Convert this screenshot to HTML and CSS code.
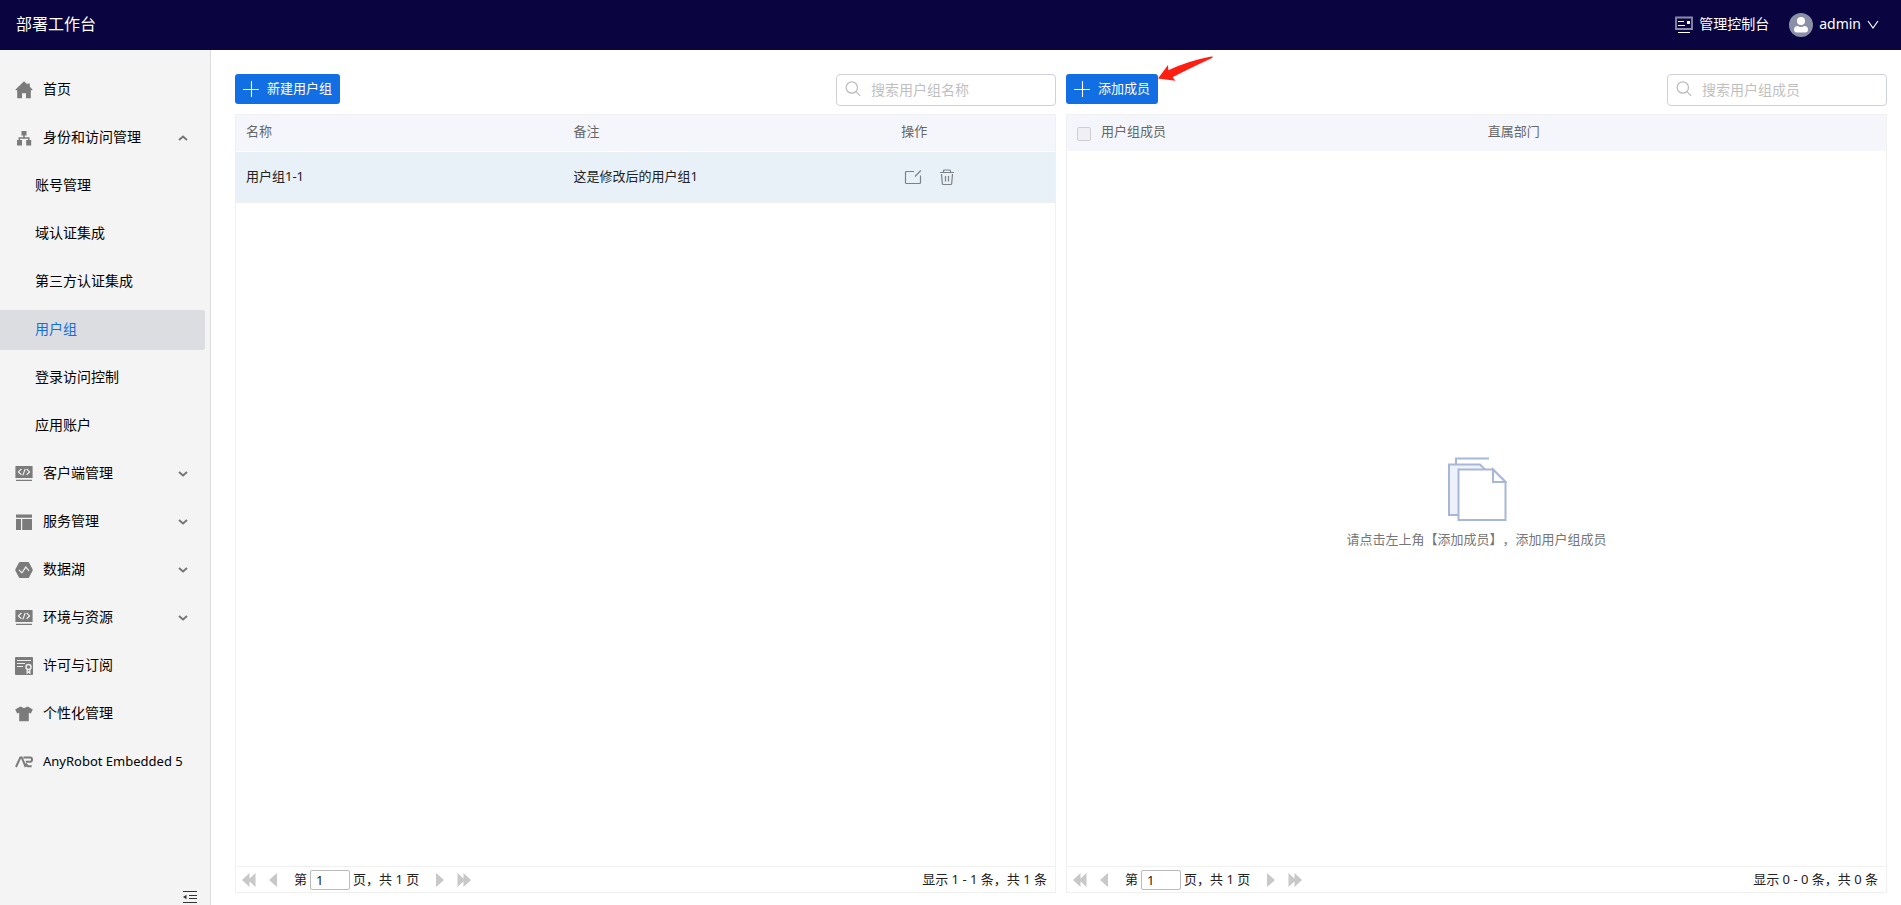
FILE: index.html
```html
<!DOCTYPE html>
<html lang="zh-CN">
<head>
<meta charset="utf-8">
<title>部署工作台</title>
<link rel="stylesheet" href="styles.css">
</head>
<body>
<svg class="sprite" aria-hidden="true">
  <symbol id="i-down" viewBox="0 0 10 10"><path d="M1 3 5 6.500 9 3" fill="none" stroke="#777" stroke-width="2"/></symbol>
  <symbol id="i-code" viewBox="0 0 18 18"><path fill="#7b7b7b" d="M1 1h16a.6.6 0 0 1 .6.6v11.400H.4V1.600A.6.6 0 0 1 1 1zM1 14.800h16v1.200H1z"/><path d="M6.400 4 3.400 6.900l3 2.900M11.600 4l3 2.900-3 2.900M10.200 4 7.800 10.400" fill="none" stroke="#f0f0f0" stroke-width="1.200"/></symbol>
  <symbol id="i-plus" viewBox="0 0 16 16"><path d="M8.500 0v16M0 8.500h16" stroke="#fff" stroke-width="1.100"/></symbol>
  <symbol id="i-search" viewBox="0 0 16 16"><circle cx="6.800" cy="6.500" r="5.700" fill="none" stroke="#bbb" stroke-width="1.200"/><path d="m11 10.600 4.200 4.200" stroke="#bbb" stroke-width="1.200"/></symbol>
  <symbol id="i-first" viewBox="0 0 14 14"><path fill="#c8c8c8" d="M7.500 0v14L0 7zM13.500 0v14L6 7z"/></symbol>
  <symbol id="i-prev" viewBox="0 0 8 14"><path fill="#c8c8c8" d="M8 0v14L0 7z"/></symbol>
  <symbol id="i-next" viewBox="0 0 8 14"><path fill="#c8c8c8" d="M0 0v14l8-7z"/></symbol>
  <symbol id="i-last" viewBox="0 0 14 14"><path fill="#c8c8c8" d="M.5 0v14L8 7zM6.500 0v14L14 7z"/></symbol>
</svg>

<header class="topbar">
  <h1 class="brand">部署工作台</h1>
  <div class="topbar-right">
    <a class="console-link" href="#">
      <svg class="icon18" viewBox="0 0 18 18"><path d="M1 1.500h16v11.500H1z" fill="none" stroke="#8d8cab" stroke-width="1.800"/><path d="M3 5.500h6M3 9.500h7M3 16.500h12" stroke="#fff" stroke-width="1.200"/><path d="M12 5h3v3h-3z" fill="#fff"/></svg>
      <span>管理控制台</span>
    </a>
    <button class="user" type="button">
      <svg class="avatar" viewBox="0 0 24 24"><circle cx="12" cy="12" r="12" fill="#8b90a8"/><circle cx="12" cy="8" r="4" fill="#fff"/><path d="M5 16.500c0-2 1.500-3.500 3.500-3.500q3.500 1.800 7 0c2 0 3.500 1.500 3.500 3.500 0 2-1 3-3 3H8c-2 0-3-1-3-3z" fill="#fff"/></svg>
      <span>admin</span>
      <svg class="caret" viewBox="0 0 12 10"><path d="M1 1l5 7 5-7" fill="none" stroke="#fff" stroke-width="1.200"/></svg>
    </button>
  </div>
</header>

<div class="layout">
  <aside class="sidebar">
    <nav class="nav">
      <a class="item" href="#"><svg class="icon18" viewBox="0 0 18 18"><path fill="#7b7b7b" d="M9 .2 12.500 3.500V2.500h2.300v3.200L17.500 8.500v.8h-1.700V17.300H11v-5H7v5H2.200V9.300H.5v-.8z"/></svg><span>首页</span></a>
      <a class="item" href="#"><svg class="icon18" viewBox="0 0 18 18"><path fill="#7b7b7b" d="M6.500 2h5v4.500h-5zM2 11h5v5.500H2zM11.200 11h5v5.500h-5z"/><path d="M9 6v3M4.300 11V9h9.500v2" fill="none" stroke="#7b7b7b" stroke-width="1.500"/></svg><span>身份和访问管理</span><svg class="chev chev-up"><use href="#i-down"/></svg></a>
      <a class="item sub" href="#">账号管理</a>
      <a class="item sub" href="#">域认证集成</a>
      <a class="item sub" href="#">第三方认证集成</a>
      <a class="item sub active" href="#">用户组</a>
      <a class="item sub" href="#">登录访问控制</a>
      <a class="item sub" href="#">应用账户</a>
      <a class="item" href="#"><svg class="icon18"><use href="#i-code"/></svg><span>客户端管理</span><svg class="chev"><use href="#i-down"/></svg></a>
      <a class="item" href="#"><svg class="icon18" viewBox="0 0 18 18"><path fill="#7b7b7b" d="M1 1.500h16v3.200H1zM1 6h5v11H1zM7.200 6H17v11H7.200z"/></svg><span>服务管理</span><svg class="chev"><use href="#i-down"/></svg></a>
      <a class="item" href="#"><svg class="icon18" viewBox="0 0 18 18"><path fill="#7b7b7b" d="M5 1h8q.7 0 1 .6L17.600 8.300q.3.700 0 1.400L14 16.400q-.3.600-1 .6H5q-.7 0-1-.6L.4 9.700Q.1 9 .4 8.300L4 1.600Q4.300 1 5 1z"/><path d="m4 8.800 2.900 3.100 3.900-5.800 3.300 3.700" fill="none" stroke="#eee" stroke-width="1.200"/></svg><span>数据湖</span><svg class="chev"><use href="#i-down"/></svg></a>
      <a class="item" href="#"><svg class="icon18"><use href="#i-code"/></svg><span>环境与资源</span><svg class="chev"><use href="#i-down"/></svg></a>
      <a class="item" href="#"><svg class="icon18" viewBox="0 0 18 18"><rect width="18" height="18" rx="1" fill="#7b7b7b"/><path d="M2 3.500h14M2 6.500h8M2 9.500h6" stroke="#eee" stroke-width="1.200"/><circle cx="13.500" cy="10" r="2.500" fill="none" stroke="#eee" stroke-width="1.500"/><path d="M12.200 12.500V16l1.300-1 1.300 1v-3.500" fill="none" stroke="#eee" stroke-width="1.400"/></svg><span>许可与订阅</span></a>
      <a class="item" href="#"><svg class="icon18" viewBox="0 0 18 18"><path fill="#7b7b7b" d="M4.800 1.800h1.800Q9 4.200 11.400 1.800h1.800L17.800 4.600 15.800 8.400l-2-.7V16.200H4.200V7.700l-2 .7L.2 4.600z"/></svg><span>个性化管理</span></a>
      <a class="item" href="#"><svg class="icon18" viewBox="0 0 18 18"><path d="M1 14 5.300 4.500h1.500l3.900 9.500M8.500 4.500h6.700q1.800 0 1.800 2 0 2.200-1.800 2.200h-4.400M10.800 10.500l1.900 2.700h4" fill="none" stroke="#7b7b7b" stroke-width="2"/></svg><span class="latin">AnyRobot Embedded 5</span></a>
    </nav>
    <button class="collapse" type="button" aria-label="收起菜单"><svg class="collapse-icon" viewBox="0 0 14 14"><path d="M0 1.500h14M6 5.500h8M6 8.500h8M0 12.500h14" stroke="#333" stroke-width="1.200"/><path d="M0 7l3.500-2.200v4.400z" fill="#333"/></svg></button>
  </aside>

  <main class="main">
    <section class="panel">
      <div class="toolbar">
        <button class="primary" type="button"><svg class="icon16"><use href="#i-plus"/></svg><span>新建用户组</span></button>
        <label class="search"><svg class="icon16"><use href="#i-search"/></svg><input type="text" placeholder="搜索用户组名称" aria-label="搜索用户组名称"></label>
      </div>
      <div class="grid">
        <table class="table">
          <colgroup><col class="c40"><col class="c40"><col class="c20"></colgroup>
          <thead><tr><th>名称</th><th>备注</th><th>操作</th></tr></thead>
          <tbody><tr>
            <td>用户组1-1</td><td>这是修改后的用户组1</td>
            <td><div class="actions">
              <button type="button" aria-label="编辑"><svg class="icon18" viewBox="0 0 18 18"><path d="M10 3.500H2.500Q1.500 3.500 1.500 4.500V14.500Q1.500 15.500 2.500 15.500H15.500Q16.500 15.500 16.500 14.500V7.500M11 8.500l5.800-6" fill="none" stroke="#7c8286" stroke-width="1.200"/></svg></button>
              <button type="button" aria-label="删除"><svg class="icon18" viewBox="0 0 18 18"><path d="M2 4.500h14M5.500 4.500V3Q5.500 2 6.500 2h5Q12.500 2 12.500 3v1.500M3.500 6l.8 9.500q.1 1 1.100 1h7.200q1 0 1.100-1L14.500 6M7.500 8v5.500M10.500 8v5.500" fill="none" stroke="#7c8286" stroke-width="1.200"/></svg></button>
            </div></td>
          </tr></tbody>
        </table>
        <div class="body"></div>
        <footer class="pager">
          <button type="button" aria-label="第一页"><svg class="arr2"><use href="#i-first"/></svg></button>
          <button type="button" aria-label="上一页"><svg class="arr1"><use href="#i-prev"/></svg></button>
          <label class="page"><span>第</span><input type="text" value="1"><span>页，共 1 页</span></label>
          <button type="button" aria-label="下一页"><svg class="arr1"><use href="#i-next"/></svg></button>
          <button type="button" aria-label="最后一页"><svg class="arr2"><use href="#i-last"/></svg></button>
          <span class="count">显示 1 - 1 条，共 1 条</span>
        </footer>
      </div>
    </section>

    <section class="panel">
      <div class="toolbar">
        <div class="pointed">
          <button class="primary" type="button"><svg class="icon16"><use href="#i-plus"/></svg><span>添加成员</span></button>
          <svg class="pointer" viewBox="0 0 56 26"><path fill="#ff1e12" d="M0 22.500 10 9l.3 5.300Q30 5 52 .8q3-.6 3 .2 0 .5-2 1.400Q30 13 14.500 21.200l3 3.600z"/></svg>
        </div>
        <label class="search"><svg class="icon16"><use href="#i-search"/></svg><input type="text" placeholder="搜索用户组成员" aria-label="搜索用户组成员"></label>
      </div>
      <div class="grid">
        <table class="table">
          <colgroup><col class="c4"><col class="c46"><col></colgroup>
          <thead><tr><th class="pick"><input class="check" type="checkbox" disabled aria-label="全选"></th><th class="tight">用户组成员</th><th>直属部门</th></tr></thead>
        </table>
        <div class="body empty">
          <svg class="papers" viewBox="0 0 60 64"><g stroke="#a9b7d6" stroke-width="2"><path d="M9 7V1.500h33" fill="none"/><path d="M2 7.500h31l6 6V58H2z" fill="#edf2fa"/><path d="M11.500 12.500H46L58.500 25v38h-47z" fill="#fff"/><path d="M46 12.500V25h12.500z" fill="#fff"/></g></svg>
          <p>请点击左上角【添加成员】，添加用户组成员</p>
        </div>
        <footer class="pager">
          <button type="button" aria-label="第一页"><svg class="arr2"><use href="#i-first"/></svg></button>
          <button type="button" aria-label="上一页"><svg class="arr1"><use href="#i-prev"/></svg></button>
          <label class="page"><span>第</span><input type="text" value="1"><span>页，共 1 页</span></label>
          <button type="button" aria-label="下一页"><svg class="arr1"><use href="#i-next"/></svg></button>
          <button type="button" aria-label="最后一页"><svg class="arr2"><use href="#i-last"/></svg></button>
          <span class="count">显示 0 - 0 条，共 0 条</span>
        </footer>
      </div>
    </section>
  </main>
</div>
</body>
</html>
```
FILE: styles.css
```css
* { box-sizing: border-box; }
body {
  margin: 0;
  height: 100vh;
  overflow: hidden;
  display: flex;
  flex-direction: column;
  font: 13px/20px "Noto Sans", "Noto Sans CJK SC", sans-serif;
  text-spacing-trim: space-all;
  color: #222;
  background: #fff;
}
button { border: 0; padding: 0; background: none; font: inherit; color: inherit; display: flex; align-items: center; }
input { font: inherit; color: inherit; }
a { color: inherit; text-decoration: none; }
svg { display: block; flex: none; }
.sprite { position: absolute; width: 0; height: 0; }
.icon18 { width: 18px; height: 18px; }
.icon16 { width: 16px; height: 16px; }

.topbar {
  flex: none;
  height: 50px;
  padding: 0 22px 0 16px;
  display: flex;
  align-items: center;
  justify-content: space-between;
  background: #0a0540;
  color: #fff;
  font-size: 14px;
}
.brand { margin: 0; padding-bottom: 2px; font-size: 16px; font-weight: 400; }
.topbar-right { display: flex; align-items: center; gap: 20px; }
.topbar-right span { padding-bottom: 2px; }
.console-link { display: flex; align-items: center; gap: 6px; }
.user { gap: 6px; }
.avatar { width: 24px; height: 24px; }
.caret { width: 12px; height: 10px; }

.layout { flex: 1; min-height: 0; display: flex; }
.sidebar {
  flex: none;
  width: 211px;
  border-right: 1px solid #dcdcdc;
  background: #f4f4f4;
  display: flex;
  flex-direction: column;
  justify-content: space-between;
  font-size: 14px;
  color: #000;
}
.nav { padding: 20px 5px 0 0; display: flex; flex-direction: column; gap: 8px; }
.item {
  height: 40px;
  padding: 0 17px 0 15px;
  display: flex;
  align-items: center;
  gap: 10px;
  white-space: nowrap;
  border-radius: 0 2px 2px 0;
}
.item span { padding-bottom: 2px; }
.sub { padding-left: 35px; padding-bottom: 2px; }
.latin { font-size: 13px; }
.active { background: #dcdde1; color: #126ee3; }
.chev { width: 10px; height: 10px; margin-left: auto; }
.chev-up { transform: rotate(180deg); }
.collapse { align-self: flex-end; padding: 0 13px 1px 0; }
.collapse-icon { width: 14px; height: 14px; }

.main {
  flex: 1;
  min-width: 0;
  padding: 24px 14px 12px 24px;
  display: grid;
  grid-template-columns: 1fr 1fr;
  gap: 10px;
}
.panel { min-width: 0; display: flex; flex-direction: column; gap: 8px; }
.toolbar { display: flex; align-items: flex-start; justify-content: space-between; }
.primary {
  height: 30px;
  padding: 0 8px;
  gap: 8px;
  border-radius: 3px;
  background: #126ee3;
  color: #fff;
}
.primary span { padding-bottom: 2px; }
.pointed { position: relative; }
.pointer { position: absolute; left: 100%; bottom: 22px; width: 56px; height: 26px; }
.search {
  width: 220px;
  height: 32px;
  padding: 0 8px;
  display: flex;
  align-items: center;
  gap: 10px;
  border: 1px solid #d0d0da;
  border-radius: 4px;
  font-size: 14px;
}
.search svg { margin-bottom: 2px; }
.search input { flex: 1; min-width: 0; padding: 0; border: 0; outline: 0; background: none; }
.search input::placeholder { color: #bfbfbf; opacity: 1; }

.grid { flex: 1; border: 1px solid #f0f0f0; display: flex; flex-direction: column; }
.table { width: 100%; table-layout: fixed; border-collapse: separate; border-spacing: 0; }
.c40 { width: 40%; }
.c20 { width: 20%; }
.c4 { width: 34px; }
.c46 { width: 46%; }
.table th, .table td { padding: 0 10px 2px; text-align: left; font-weight: 400; }
.table th { height: 36px; padding-bottom: 4px; background: #f5f6fb; color: #666; }
.table th.pick { padding-bottom: 0; }
.table th.tight { padding-left: 0; }
.table td { height: 52px; background: #e8f1f7; border-top: 1px solid #fff; border-bottom: 1px solid #eee; }
.actions { display: flex; gap: 16px; padding: 2px 0 0 3px; }
.check {
  display: block;
  appearance: none;
  width: 14px;
  height: 14px;
  margin: 2px 0 0;
  border: 1px solid #d0d0d4;
  border-radius: 2px;
  background: #f0f0f4;
}
.body { flex: 1; }
.empty { display: flex; flex-direction: column; align-items: center; justify-content: center; gap: 8px; padding-bottom: 12px; color: #777; }
.empty p { margin: 0; }
.papers { width: 60px; height: 64px; }

.pager { height: 26px; border-top: 1px solid #f0f0f0; padding: 0 8px 0 6px; display: flex; align-items: center; gap: 13px; }
.pager span { padding-bottom: 2px; }
.arr2 { width: 14px; height: 14px; }
.arr1 { width: 8px; height: 14px; }
.page { display: flex; align-items: center; gap: 3px; padding: 0 4px; }
.page input { width: 40px; height: 20px; padding: 0 5px; border: 1px solid #bbb; border-radius: 2px; background: #fff; }
.count { margin-left: auto; }
```
